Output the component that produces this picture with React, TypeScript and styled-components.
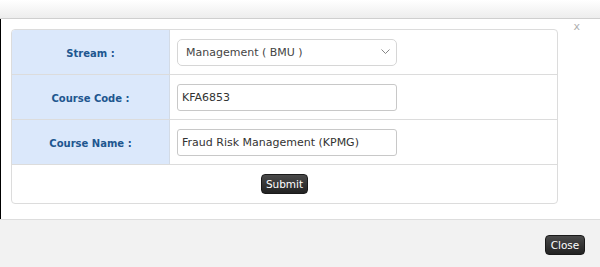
import React from "react";
import styled, { createGlobalStyle } from "styled-components";

const GlobalStyle = createGlobalStyle`
  html, body {
    margin: 0;
    padding: 0;
    background: #ffffff;
  }

  body {
    font-family: "DejaVu Sans", Tahoma, sans-serif;
  }
`;

const Modal = styled.div`
  width: 600px;
  height: 267px;
  display: flex;
  flex-direction: column;
  overflow: hidden;
`;

const Header = styled.div`
  height: 18px;
  background: linear-gradient(#ffffff, #ededed);
  border-bottom: 1px solid #cfcfcf;
`;

const Body = styled.div`
  position: relative;
  height: 200px;
  box-sizing: border-box;
  padding: 10px 42px 0 10px;
  border-left: 1px solid #000000;
  background: #ffffff;
`;

const CloseX = styled.span`
  position: absolute;
  top: 1px;
  right: 20px;
  font-size: 11px;
  color: #b0b0b0;
  font-family: "DejaVu Sans", sans-serif;
`;

const Card = styled.div`
  border: 1px solid #dcdcdc;
  border-radius: 4px;
  overflow: hidden;
`;

const Row = styled.div`
  display: flex;
  height: 45px;
  box-sizing: border-box;
  border-bottom: 1px solid #dcdcdc;
`;

const Label = styled.div`
  width: 158px;
  flex-shrink: 0;
  display: flex;
  align-items: center;
  justify-content: center;
  background: #dbe8fb;
  border-right: 1px solid #d3dbe6;
  color: #20568f;
  font-weight: bold;
  font-size: 10px;
  padding-top: 2px;
  box-sizing: border-box;
`;

const Field = styled.div`
  flex: 1;
  display: flex;
  align-items: center;
  padding-left: 7px;
`;

const SelectBox = styled.div`
  width: 220px;
  height: 27px;
  box-sizing: border-box;
  border: 1px solid #d6d6d6;
  border-radius: 5px;
  display: flex;
  align-items: center;
  justify-content: space-between;
  padding: 0 6px 0 8px;
  font-size: 11px;
  color: #444444;
`;

const TextInput = styled.input`
  width: 220px;
  height: 27px;
  box-sizing: border-box;
  border: 1px solid #c8c8c8;
  border-radius: 3px;
  padding: 0 4px;
  font-family: "DejaVu Sans", Tahoma, sans-serif;
  font-size: 11px;
  color: #333333;
  outline: none;
`;

const ActionRow = styled.div`
  height: 38px;
  display: flex;
  align-items: center;
  justify-content: center;
`;

const DarkButton = styled.button<{ $w: number }>`
  width: ${(p) => p.$w}px;
  height: 20px;
  padding: 0;
  border: 1px solid #1a1a1a;
  border-radius: 4px;
  background: linear-gradient(#4a4a4a, #222222);
  color: #ffffff;
  font-family: "DejaVu Sans", Tahoma, sans-serif;
  font-size: 10.5px;
  line-height: 18px;
  cursor: pointer;
`;

const Footer = styled.div`
  flex: 1;
  border-top: 1px solid #dddddd;
  background: #f2f2f2;
  display: flex;
  align-items: center;
  justify-content: flex-end;
  padding: 2px 15px 0 0;
`;

const Chevron = () => (
  <svg width="9" height="6" viewBox="0 0 9 6">
    <path d="M0.5 0.5 L4.5 4.5 L8.5 0.5" fill="none" stroke="#777" strokeWidth="0.9" />
  </svg>
);

function App() {
  return (
    <Modal>
      <GlobalStyle />
      <Header />
      <Body>
        <CloseX>x</CloseX>
        <Card>
          <Row>
            <Label>Stream :</Label>
            <Field>
              <SelectBox>
                <span>Management ( BMU )</span>
                <Chevron />
              </SelectBox>
            </Field>
          </Row>
          <Row>
            <Label>Course Code :</Label>
            <Field>
              <TextInput defaultValue="KFA6853" />
            </Field>
          </Row>
          <Row>
            <Label>Course Name :</Label>
            <Field>
              <TextInput defaultValue="Fraud Risk Management (KPMG)" />
            </Field>
          </Row>
          <ActionRow>
            <DarkButton $w={47}>Submit</DarkButton>
          </ActionRow>
        </Card>
      </Body>
      <Footer>
        <DarkButton $w={40}>Close</DarkButton>
      </Footer>
    </Modal>
  );
}

export default App;
